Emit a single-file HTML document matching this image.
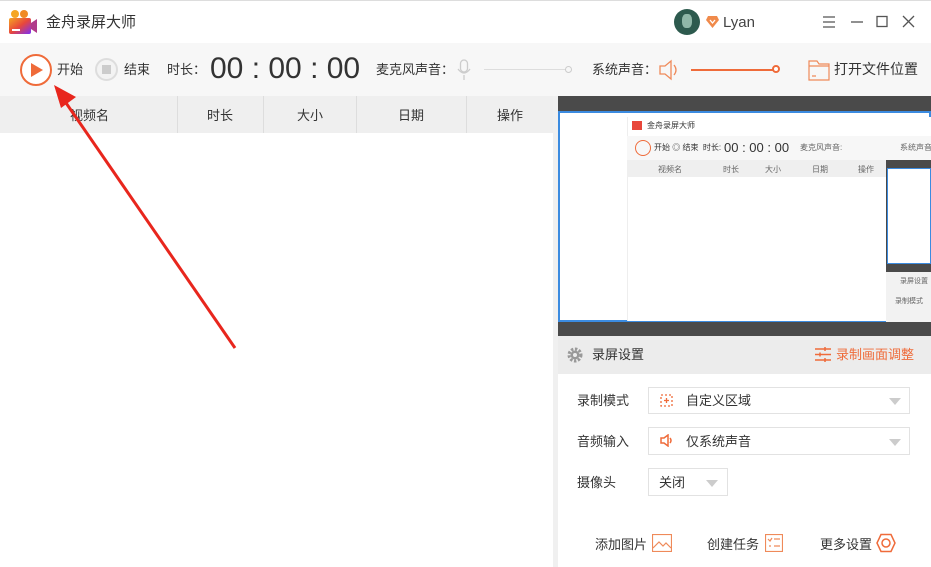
<!DOCTYPE html>
<html><head><meta charset="utf-8"><style>
*{margin:0;padding:0;box-sizing:border-box}
body{width:931px;height:567px;overflow:hidden;background:#f0f0f0;font-family:"Liberation Sans","Noto Sans CJK SC",sans-serif;color:#333;position:relative;font-size:13px}
.abs{position:absolute}
.t{white-space:nowrap;line-height:1.4}
</style></head><body>
<div class="abs" style="left:0;top:0;width:931px;height:43px;background:#fff;border-top:1px solid #ddd"></div>
<svg class="abs" style="left:9px;top:9px" width="28" height="26" viewBox="0 0 28 26">
<defs><linearGradient id="g" x1="0" y1="0" x2="1" y2="1"><stop offset="0" stop-color="#f5a623"/><stop offset=".5" stop-color="#e8473b"/><stop offset="1" stop-color="#7b2ff7"/></linearGradient></defs>
<circle cx="6" cy="5" r="4" fill="#f5a623"/><circle cx="15" cy="5" r="4" fill="#f08a24"/>
<rect x="0" y="9" width="22" height="16" rx="2" fill="url(#g)"/><path d="M22 14 L28 10 V24 L22 20Z" fill="#b03a8a"/><rect x="3" y="20" width="8" height="2" fill="#fff"/></svg>
<div class="abs t" style="left:46px;top:12px;font-size:15px;color:#333">金舟录屏大师</div>
<div class="abs" style="left:674px;top:9px;width:26px;height:26px;border-radius:50%;background:#2d5a4e"></div>
<div class="abs" style="left:682px;top:14px;width:10px;height:14px;border-radius:40%;background:#8fb7a8"></div>
<svg class="abs" style="left:706px;top:16px" width="13" height="12"><path d="M2 0H11L13 4L6.5 12L0 4Z" fill="#f08a4b"/><path d="M4 4L6.5 7L9 4" stroke="#fff" stroke-width="1.3" fill="none"/></svg>
<div class="abs t" style="left:723px;top:12px;font-size:15px;color:#444">Lyan</div>
<svg class="abs" style="left:822px;top:15px" width="96" height="14" stroke="#555" stroke-width="1.3" fill="none"><path d="M1 2H13M1 7H13M1 12H13"/><path d="M29 7H41"/><rect x="55" y="1.5" width="10" height="10"/><path d="M81 1L92 12M92 1L81 12"/></svg>
<div class="abs" style="left:0;top:43px;width:931px;height:53px;background:#f7f7f7"></div>
<div class="abs" style="left:20px;top:54px;width:32px;height:32px;border:2px solid #ef6b3a;border-radius:50%;background:#fff"></div>
<svg class="abs" style="left:30px;top:62px" width="14" height="16"><path d="M1 1L13 8L1 15Z" fill="#ef6b3a"/></svg>
<div class="abs t" style="left:57px;top:61px">开始</div>
<div class="abs" style="left:95px;top:58px;width:23px;height:23px;border:2px solid #ddd;border-radius:50%;background:#f3f3f3"></div>
<div class="abs" style="left:102px;top:65px;width:9px;height:9px;background:#ccc"></div>
<div class="abs t" style="left:124px;top:61px">结束</div>
<div class="abs t" style="left:167px;top:61px">时长：</div>
<div class="abs" style="left:210px;top:52px;font-size:30px;color:#333;white-space:nowrap;line-height:1.15">00 : 00 : 00</div>
<div class="abs t" style="left:376px;top:61px">麦克风声音：</div>
<svg class="abs" style="left:457px;top:59px" width="14" height="22" stroke="#ccc" fill="none" stroke-width="1.3"><rect x="3.5" y="1" width="7" height="12" rx="3.5"/><path d="M1 10Q7 18 13 10M7 16V21"/></svg>
<div class="abs" style="left:484px;top:69px;width:82px;height:1px;background:#ddd"></div>
<div class="abs" style="left:565px;top:66px;width:7px;height:7px;border:1px solid #ccc;border-radius:50%"></div>
<div class="abs t" style="left:592px;top:61px">系统声音：</div>
<svg class="abs" style="left:659px;top:59px" width="22" height="22" stroke="#ef8a5a" fill="none" stroke-width="1.3"><path d="M1 7H6L12 2V20L6 15H1Z"/><path d="M15 6Q19 11 15 16"/></svg>
<div class="abs" style="left:691px;top:69px;width:82px;height:2px;background:#ef6b3a"></div>
<div class="abs" style="left:772px;top:65px;width:8px;height:8px;border:2px solid #ef6b3a;border-radius:50%;background:#fff"></div>
<svg class="abs" style="left:808px;top:59px" width="22" height="22" stroke="#ef8a5a" fill="none" stroke-width="1.2"><path d="M1 2H9L11 5H21V21H1Z"/><path d="M1 7H21M4 17H8"/></svg>
<div class="abs t" style="left:834px;top:60px;font-size:14px">打开文件位置</div>
<div class="abs" style="left:0;top:96px;width:553px;height:471px;background:#fff"></div>
<div class="abs" style="left:0;top:96px;width:553px;height:37px;background:#efefef"></div>
<div class="abs" style="left:177px;top:96px;width:1px;height:37px;background:#ddd"></div>
<div class="abs" style="left:263px;top:96px;width:1px;height:37px;background:#ddd"></div>
<div class="abs" style="left:356px;top:96px;width:1px;height:37px;background:#ddd"></div>
<div class="abs" style="left:466px;top:96px;width:1px;height:37px;background:#ddd"></div>
<div class="abs t" style="left:70px;top:107px">视频名</div>
<div class="abs t" style="left:207px;top:107px">时长</div>
<div class="abs t" style="left:297px;top:107px">大小</div>
<div class="abs t" style="left:398px;top:107px">日期</div>
<div class="abs t" style="left:497px;top:107px">操作</div>
<div class="abs" style="left:558px;top:96px;width:373px;height:240px;background:#4a4a4a"></div>
<div class="abs" style="left:558px;top:111px;width:373px;height:211px;background:#fff;border:2px solid #3b8be0"></div>
<div class="abs" style="left:627px;top:117px;width:304px;height:204px;background:#fff;border-left:1px solid #eee"></div>
<div class="abs" style="left:627px;top:136px;width:304px;height:24px;background:#f7f7f7"></div>
<div class="abs" style="left:627px;top:160px;width:260px;height:17px;background:#efefef"></div>
<div class="abs" style="left:886px;top:160px;width:45px;height:162px;background:#4a4a4a"></div>
<div class="abs" style="left:887px;top:168px;width:44px;height:96px;background:#fff;border:1px solid #3b8be0"></div>
<div class="abs" style="left:886px;top:272px;width:45px;height:50px;background:#f2f2f2"></div>
<div class="abs" style="left:632px;top:121px;width:10px;height:9px;background:#e8473b"></div>
<div class="abs t" style="left:647px;top:120px;font-size:8px">金舟录屏大师</div>
<div class="abs" style="left:635px;top:140px;width:16px;height:16px;border:1px solid #ef6b3a;border-radius:50%"></div>
<div class="abs t" style="left:654px;top:142px;font-size:8px">开始 ◎ 结束 &nbsp;时长:</div>
<div class="abs" style="left:724px;top:140px;font-size:13px;white-space:nowrap">00 : 00 : 00</div>
<div class="abs t" style="left:800px;top:142px;font-size:8px;color:#666">麦克风声音:</div>
<div class="abs t" style="left:900px;top:142px;font-size:8px;color:#666">系统声音</div>
<div class="abs t" style="left:658px;top:164px;font-size:8px;color:#666">视频名</div>
<div class="abs t" style="left:723px;top:164px;font-size:8px;color:#666">时长</div>
<div class="abs t" style="left:765px;top:164px;font-size:8px;color:#666">大小</div>
<div class="abs t" style="left:812px;top:164px;font-size:8px;color:#666">日期</div>
<div class="abs t" style="left:858px;top:164px;font-size:8px;color:#666">操作</div>
<div class="abs t" style="left:900px;top:277px;font-size:7px;color:#666">录屏设置</div>
<div class="abs t" style="left:895px;top:297px;font-size:7px;color:#666">录制模式</div>
<div class="abs" style="left:558px;top:336px;width:373px;height:38px;background:#ececec"></div>
<svg class="abs" style="left:567px;top:347px" width="16" height="16"><circle cx="8" cy="8" r="6" fill="none" stroke="#999" stroke-width="3" stroke-dasharray="2.4 1.6"/><circle cx="8" cy="8" r="4.5" fill="#999"/><circle cx="8" cy="8" r="2" fill="#ececec"/></svg>
<div class="abs t" style="left:592px;top:346px">录屏设置</div>
<svg class="abs" style="left:815px;top:347px" width="16" height="15" stroke="#ef6b3a" stroke-width="1.5"><path d="M0 2H16M0 7.5H16M0 13H16"/><path d="M10 0V4M5 5.5V9.5M10 11V15"/></svg>
<div class="abs t" style="left:836px;top:346px;color:#ef6b3a">录制画面调整</div>
<div class="abs" style="left:558px;top:374px;width:373px;height:193px;background:#fff"></div>
<div class="abs t" style="left:577px;top:392px">录制模式</div>
<div class="abs" style="left:648px;top:387px;width:262px;height:27px;border:1px solid #e2e2e2"></div>
<svg class="abs" style="left:660px;top:394px" width="13" height="13" stroke="#ef6b3a" fill="none" stroke-width="1.3" stroke-dasharray="2 2"><rect x="1" y="1" width="11" height="11"/><path d="M6.5 4V9M4 6.5H9" stroke-dasharray="none"/></svg>
<div class="abs t" style="left:686px;top:392px">自定义区域</div>
<svg class="abs" style="left:889px;top:398px" width="12" height="7"><path d="M0 0H12L6 7Z" fill="#ccc"/></svg>
<div class="abs t" style="left:577px;top:433px">音频输入</div>
<div class="abs" style="left:648px;top:427px;width:262px;height:28px;border:1px solid #e2e2e2"></div>
<svg class="abs" style="left:660px;top:434px" width="14" height="13" stroke="#ef6b3a" fill="none" stroke-width="1.5"><path d="M1 4H4L8 1V12L4 9H1Z"/><path d="M10 4Q12 6.5 10 9"/></svg>
<div class="abs t" style="left:686px;top:433px">仅系统声音</div>
<svg class="abs" style="left:889px;top:439px" width="12" height="7"><path d="M0 0H12L6 7Z" fill="#ccc"/></svg>
<div class="abs t" style="left:577px;top:474px">摄像头</div>
<div class="abs" style="left:648px;top:468px;width:80px;height:28px;border:1px solid #e2e2e2"></div>
<div class="abs t" style="left:659px;top:474px">关闭</div>
<svg class="abs" style="left:706px;top:480px" width="12" height="7"><path d="M0 0H12L6 7Z" fill="#ccc"/></svg>
<div class="abs t" style="left:595px;top:536px">添加图片</div>
<svg class="abs" style="left:652px;top:534px" width="20" height="18" stroke="#ef8a5a" fill="none" stroke-width="1.2"><rect x=".5" y=".5" width="19" height="17"/><path d="M1 14L7 8L11 12L14 9L19 14"/></svg>
<div class="abs t" style="left:707px;top:536px">创建任务</div>
<svg class="abs" style="left:765px;top:534px" width="18" height="18" stroke="#ef8a5a" fill="none" stroke-width="1.2"><rect x=".5" y=".5" width="17" height="17"/><path d="M3 5L5 7L7 4M9 5H15M4 12H6M9 12H15"/></svg>
<div class="abs t" style="left:820px;top:536px">更多设置</div>
<svg class="abs" style="left:876px;top:533px" width="20" height="20" stroke="#ef6b3a" fill="none" stroke-width="1.5"><path d="M5 1.5H15L19 10L15 18.5H5L1 10Z"/><circle cx="10" cy="10" r="4"/></svg>
<svg class="abs" style="left:0;top:0" width="300" height="360"><path d="M235 348L64 100" stroke="#e8261d" stroke-width="3"/><path d="M54 85L76 97L61 108Z" fill="#e8261d"/></svg>
</body></html>
